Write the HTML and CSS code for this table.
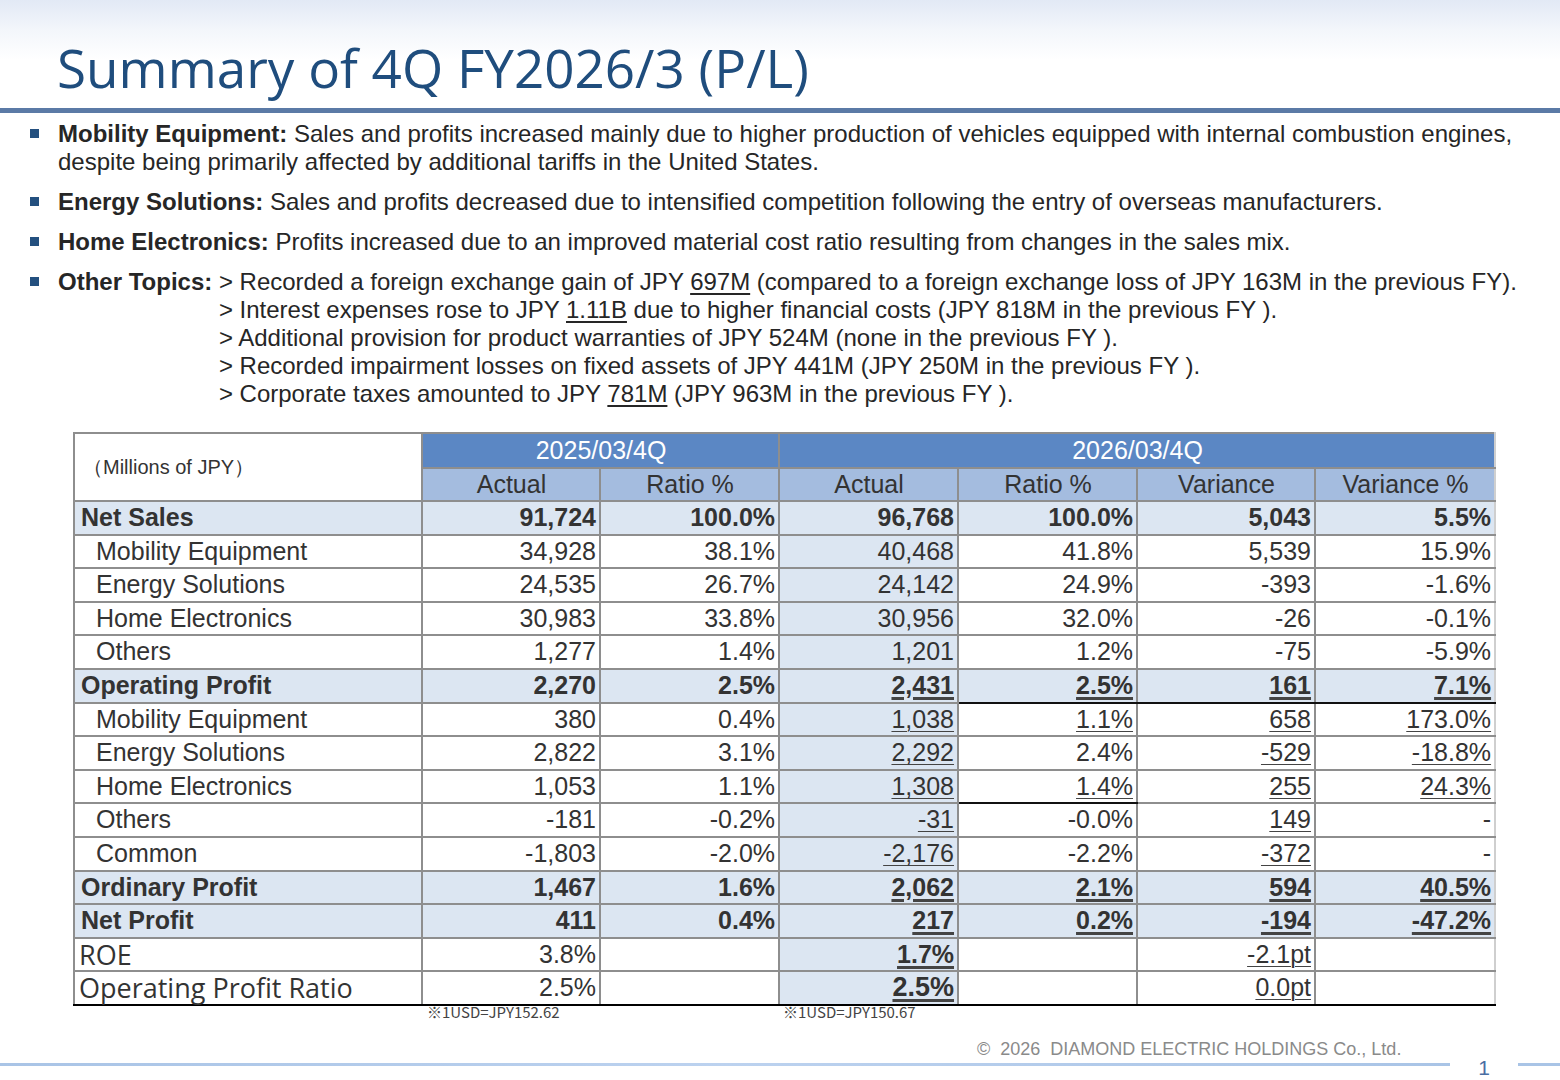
FILE: index.html
```html
<!DOCTYPE html>
<html lang="en">
<head>
    <meta charset="UTF-8">
    <title>Summary of 4Q FY2026/3 (P/L)</title>
    <link rel="stylesheet" href="styles.css">
</head>
<body>
    <div class="slide">
        <header class="title-bar">
            <h1>Summary of 4Q FY2026/3 (P/L)</h1>
        </header>
        <div class="title-rule"></div>

        <ul class="points">
            <li>
                <span class="mark"></span>
                <p><b>Mobility Equipment:</b> Sales and profits increased mainly due to higher production of vehicles equipped with internal combustion engines, despite being primarily affected by additional tariffs in the United States.</p>
            </li>
            <li>
                <span class="mark"></span>
                <p><b>Energy Solutions:</b> Sales and profits decreased due to intensified competition following the entry of overseas manufacturers.</p>
            </li>
            <li>
                <span class="mark"></span>
                <p><b>Home Electronics:</b> Profits increased due to an improved material cost ratio resulting from changes in the sales mix.</p>
            </li>
            <li>
                <span class="mark"></span>
                <div class="topics">
                    <b>Other Topics:&nbsp;</b>
                    <div class="topic-lines">
                        <p>&gt; Recorded a foreign exchange gain of JPY <u>697M</u> (compared to a foreign exchange loss of JPY 163M in the previous FY).</p>
                        <p>&gt; Interest expenses rose to JPY <u>1.11B</u> due to higher financial costs (JPY 818M in the previous FY ).</p>
                        <p>&gt; Additional provision for product warranties of JPY 524M (none in the previous FY ).</p>
                        <p>&gt; Recorded impairment losses on fixed assets of JPY 441M (JPY 250M in the previous FY ).</p>
                        <p>&gt; Corporate taxes amounted to JPY <u>781M</u> (JPY 963M in the previous FY ).</p>
                    </div>
                </div>
            </li>
        </ul>

        <table class="pl">
            <colgroup>
                <col style="width:348px">
                <col style="width:178px">
                <col style="width:179px">
                <col style="width:179px">
                <col style="width:179px">
                <col style="width:178px">
                <col style="width:180px">
            </colgroup>
            <thead>
                <tr class="h1">
                    <th rowspan="2" class="unit">（Millions of JPY）</th>
                    <th colspan="2">2025/03/4Q</th>
                    <th colspan="4">2026/03/4Q</th>
                </tr>
                <tr class="h2">
                    <th>Actual</th>
                    <th>Ratio %</th>
                    <th>Actual</th>
                    <th>Ratio %</th>
                    <th>Variance</th>
                    <th>Variance %</th>
                </tr>
            </thead>
            <tbody>
                <tr class="total">
                    <td class="label">Net Sales</td>
                    <td>91,724</td><td>100.0%</td><td class="cur">96,768</td><td>100.0%</td><td>5,043</td><td>5.5%</td>
                </tr>
                <tr>
                    <td class="label sub">Mobility Equipment</td>
                    <td>34,928</td><td>38.1%</td><td class="cur">40,468</td><td>41.8%</td><td>5,539</td><td>15.9%</td>
                </tr>
                <tr>
                    <td class="label sub">Energy Solutions</td>
                    <td>24,535</td><td>26.7%</td><td class="cur">24,142</td><td>24.9%</td><td>-393</td><td>-1.6%</td>
                </tr>
                <tr>
                    <td class="label sub">Home Electronics</td>
                    <td>30,983</td><td>33.8%</td><td class="cur">30,956</td><td>32.0%</td><td>-26</td><td>-0.1%</td>
                </tr>
                <tr>
                    <td class="label sub">Others</td>
                    <td>1,277</td><td>1.4%</td><td class="cur">1,201</td><td>1.2%</td><td>-75</td><td>-5.9%</td>
                </tr>
                <tr class="total">
                    <td class="label">Operating Profit</td>
                    <td>2,270</td><td>2.5%</td><td class="cur"><u>2,431</u></td><td class="edge"><u>2.5%</u></td><td class="edge"><u>161</u></td><td class="edge"><u>7.1%</u></td>
                </tr>
                <tr>
                    <td class="label sub">Mobility Equipment</td>
                    <td>380</td><td>0.4%</td><td class="cur"><u>1,038</u></td><td><u>1.1%</u></td><td><u>658</u></td><td><u>173.0%</u></td>
                </tr>
                <tr>
                    <td class="label sub">Energy Solutions</td>
                    <td>2,822</td><td>3.1%</td><td class="cur"><u>2,292</u></td><td>2.4%</td><td><u>-529</u></td><td><u>-18.8%</u></td>
                </tr>
                <tr>
                    <td class="label sub">Home Electronics</td>
                    <td>1,053</td><td>1.1%</td><td class="cur"><u>1,308</u></td><td class="edge"><u>1.4%</u></td><td><u>255</u></td><td><u>24.3%</u></td>
                </tr>
                <tr>
                    <td class="label sub">Others</td>
                    <td>-181</td><td>-0.2%</td><td class="cur"><u>-31</u></td><td>-0.0%</td><td><u>149</u></td><td>-</td>
                </tr>
                <tr>
                    <td class="label sub">Common</td>
                    <td>-1,803</td><td>-2.0%</td><td class="cur"><u>-2,176</u></td><td>-2.2%</td><td><u>-372</u></td><td>-</td>
                </tr>
                <tr class="total">
                    <td class="label">Ordinary Profit</td>
                    <td>1,467</td><td>1.6%</td><td class="cur"><u>2,062</u></td><td><u>2.1%</u></td><td><u>594</u></td><td><u>40.5%</u></td>
                </tr>
                <tr class="total">
                    <td class="label">Net Profit</td>
                    <td>411</td><td>0.4%</td><td class="cur"><u>217</u></td><td><u>0.2%</u></td><td><u>-194</u></td><td><u>-47.2%</u></td>
                </tr>
                <tr>
                    <td class="label wide">ROE</td>
                    <td>3.8%</td><td></td><td class="cur strong"><u>1.7%</u></td><td></td><td><u>-2.1pt</u></td><td></td>
                </tr>
                <tr class="last">
                    <td class="label wide">Operating Profit Ratio</td>
                    <td>2.5%</td><td></td><td class="cur strong big"><u>2.5%</u></td><td></td><td><u>0.0pt</u></td><td></td>
                </tr>
            </tbody>
        </table>

        <div class="rates">
            <span class="rate-a">※1USD=JPY152.62</span>
            <span class="rate-b">※1USD=JPY150.67</span>
        </div>

        <footer class="foot">
            <p class="copy">©&nbsp; 2026&nbsp; DIAMOND ELECTRIC HOLDINGS Co., Ltd.</p>
            <div class="foot-line">
                <span class="line-long"></span>
                <span class="page-no">1</span>
                <span class="line-short"></span>
            </div>
        </footer>
    </div>
</body>
</html>
```

FILE: styles.css
```css
body {
    margin: 0;
    padding: 0;
    background-color: #fff;
    font-family: "Liberation Sans", Arial, sans-serif;
    color: #262626;
}
.slide {
    width: 1560px;
    height: 1080px;
    overflow: hidden;
}
.title-bar {
    height: 108px;
    background: linear-gradient(to bottom, #e2e9f5 0px, #f3f6fb 30px, #ffffff 60px);
    display: flex;
    align-items: flex-end;
}
h1 {
    margin: 0 0 9px 57px;
    font-family: "Open Sans", "Noto Sans", sans-serif;
    font-weight: 400;
    font-size: 53px;
    line-height: 62px;
    color: #1f4d7d;
}
.title-rule {
    height: 5px;
    background-color: #5b7aa6;
}

/* bullet points */
.points {
    list-style: none;
    margin: 7px 0 0 0;
    padding: 0 20px 0 30px;
    font-size: 24px;
    line-height: 28px;
}
.points li {
    display: flex;
    align-items: flex-start;
    margin-bottom: 12px;
}
.points p {
    margin: 0;
}
.mark {
    flex: none;
    width: 9px;
    height: 9px;
    margin: 9px 19px 0 0;
    background-color: #24507f;
}
.topics {
    display: flex;
}
.topics b {
    white-space: nowrap;
}
.topic-lines p {
    white-space: nowrap;
}
u {
    text-underline-offset: 3px;
}

/* P/L table */
.pl {
    margin: 24px 0 0 73px;
    border-collapse: collapse;
    table-layout: fixed;
    width: 1421px;
    font-size: 25px;
    color: #333;
}
.pl th, .pl td {
    border: 2px solid #8e8e8e;
    padding: 0 3px 0 4px;
    height: 31.6px;
    line-height: 31.6px;
    white-space: nowrap;
}
.pl th {
    font-weight: 400;
}
.pl .h1 th {
    background-color: #5b87c4;
    color: #fff;
    height: 33px;
    line-height: 33px;
}
.pl .h2 th {
    background-color: #a4bcdf;
    color: #333;
    height: 31px;
    line-height: 31px;
}
.pl th.unit {
    background-color: #fff;
    text-align: left;
    padding-left: 8px;
    font-size: 20px;
    color: #333;
}
.pl td {
    text-align: right;
}
.pl td.label {
    text-align: left;
    padding-left: 6px;
}
.pl td.sub {
    padding-left: 21px;
}
.pl td.wide {
    font-family: "Open Sans", "Noto Sans", sans-serif;
    font-size: 27px;
    padding-left: 4px;
}
.pl td.cur {
    background-color: #dce6f2;
}
.pl tr.total td {
    background-color: #dce6f2;
    font-weight: 700;
}
.pl u {
    text-decoration-thickness: 1px;
    text-decoration-color: #444;
}
.pl tr.total u, .pl td.strong u {
    text-decoration-thickness: 3px;
}
.pl td.edge {
    border-bottom-color: #111;
}
.pl td.strong {
    font-weight: 700;
}
.pl td.big {
    font-size: 27px;
}
.pl tr.last td {
    border-bottom-color: #000;
}
.pl td:last-child, .pl th:last-child {
    border-right-color: #cfcfcf;
}

/* exchange rates */
.rates {
    display: flex;
    font-family: "Noto Sans CJK JP", "DejaVu Sans", sans-serif;
    font-size: 15px;
    line-height: 18px;
    color: #444;
    margin-top: -3px;
}
.rate-a {
    margin-left: 427px;
    width: 356px;
}

/* footer */
.foot {
    margin-top: 17px;
}
.copy {
    margin: 0 0 0 977px;
    font-size: 18px;
    line-height: 22px;
    color: #8a8a8a;
}
.foot-line {
    display: flex;
    align-items: flex-start;
    margin-top: -4px;
}
.line-long {
    width: 1450px;
    height: 3px;
    margin-top: 7px;
    background: linear-gradient(to right, #a9c4e6, #bcd2ef 50%, #a9c4e6);
}
.page-no {
    width: 68px;
    text-align: center;
    font-size: 21px;
    line-height: 24px;
    color: #4a6ea3;
}
.line-short {
    flex: 1;
    height: 3px;
    margin-top: 7px;
    background-color: #a9c4e6;
}
```
